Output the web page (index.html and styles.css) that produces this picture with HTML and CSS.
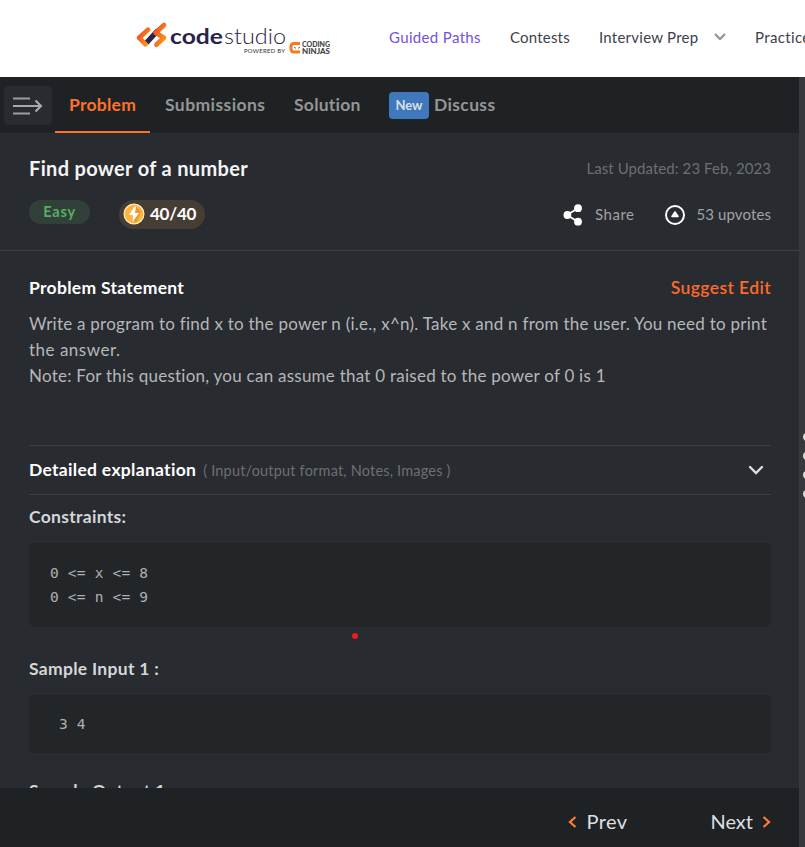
FILE: index.html
```html
<!DOCTYPE html>
<html lang="en">
<head>
<meta charset="utf-8">
<title>Find power of a number</title>
<link rel="stylesheet" href="styles.css">
</head>
<body>
<header class="site-header">
  <svg class="logo" width="196" height="36" viewBox="0 0 196 36">
    <defs>
      <linearGradient id="flame" x1="0" y1="0" x2="1" y2="1"><stop offset="0" stop-color="#f04a23"/><stop offset="1" stop-color="#fb9a1c"/></linearGradient>
    </defs>
    <g transform="translate(0 1.300)" fill="none" stroke-linecap="round" stroke-linejoin="round">
      <path d="M10.500 21.500 22 9" stroke="#2a2348" stroke-width="5.200" stroke-linecap="butt"/>
      <path d="M12 8.500 3.300 16.500 9.500 23" stroke="url(#flame)" stroke-width="4.800"/>
      <path d="M28 3.800 19.500 11.500 28 16.500 20.500 23.300" stroke="url(#flame)" stroke-width="4.800"/>
    </g>
    <text class="logo-code" x="34" y="24" textLength="53" lengthAdjust="spacingAndGlyphs">code</text>
    <text class="logo-studio" x="88" y="24" textLength="62" lengthAdjust="spacingAndGlyphs">studio</text>
    <text class="logo-powered" x="108" y="33" textLength="41">POWERED BY</text>
    <path d="M164 23.500H158Q155 23.500 155 26.500V28.500Q155 32 158 32H164" fill="none" stroke="#f47b20" stroke-width="3"/>
    <path d="M157 26h8v3.500h-8z" fill="#fff"/><path d="M158 27.300l2 1M162 28.300l2-1" stroke="#444" stroke-width=".8"/>
    <text class="logo-ninjas" x="166" y="27.300" textLength="28" lengthAdjust="spacingAndGlyphs">CODING</text>
    <text class="logo-ninjas" x="166" y="34" textLength="28" lengthAdjust="spacingAndGlyphs">NINJAS</text>
  </svg>
  <nav class="nav">
    <a class="nav-guided">Guided Paths</a>
    <a class="nav-contests">Contests</a>
    <a class="nav-interview"><span>Interview Prep</span><svg width="14" height="10" viewBox="0 0 14 10"><path d="M2 2 7 7 12 2" fill="none" stroke="#8d8f98" stroke-width="2"/></svg></a>
    <a class="nav-practice">Practice</a>
  </nav>
</header>
<div class="workspace">
  <main class="panel">
    <div class="tabs">
      <button class="menu-btn"><svg width="32" height="20" viewBox="0 0 32 20"><path d="M1 2.500H18M1 17.500H18" stroke="#9b9da0" stroke-width="2.200"/><path d="M1 10H28M23.500 4.500 29 10 23.500 15.500" fill="none" stroke="#aaa8ab" stroke-width="2.200"/></svg></button>
      <a class="tab tab-active">Problem</a>
      <a class="tab tab-sub">Submissions</a>
      <a class="tab tab-sol">Solution</a>
      <a class="tab tab-dis"><span class="new">New</span>Discuss</a>
    </div>
    <section class="summary">
      <div class="row">
        <h1 class="title">Find power of a number</h1>
        <span class="updated">Last Updated: 23 Feb, 2023</span>
      </div>
      <div class="row meta">
        <div class="badges">
          <span class="easy">Easy</span>
          <span class="score"><svg width="22" height="22" viewBox="0 0 22 22"><circle cx="11" cy="11" r="9.900" fill="#feb43c" stroke="#fff1d2" stroke-width="1.200"/><path d="M13 4 18 8 14 19 9 18z" fill="#e69b2a"/><path d="M11.500 3.500 6 12h4l-.5 7 6.500-9h-4l1-6.500z" fill="#fff"/></svg><span>40/40</span></span>
        </div>
        <div class="actions">
          <svg width="20" height="22" viewBox="0 0 20 22"><path d="M15 4.300 4 11 15 17.700" fill="none" stroke="#fff" stroke-width="1.800"/><g fill="#fff"><circle cx="15" cy="4.200" r="3.900"/><circle cx="4.400" cy="11" r="3.900"/><circle cx="15" cy="17.700" r="3.900"/></g></svg>
          <span class="share">Share</span>
          <svg width="22" height="22" viewBox="0 0 22 22"><circle cx="11" cy="11" r="9" fill="none" stroke="#fff" stroke-width="2"/><path d="M11 8 14 12.400H8z" fill="#fff" stroke="#fff" stroke-width="1.600" stroke-linejoin="round"/></svg>
          <span class="votes">53 upvotes</span>
        </div>
      </div>
    </section>
    <section class="content">
      <div class="row statement-head">
        <h2 class="h">Problem Statement</h2>
        <a class="suggest">Suggest Edit</a>
      </div>
      <p class="statement">Write a program to find x to the power n (i.e., x^n). Take x and n from the user. You need to print<br><span class="answer">the answer.</span><br>Note: For this question, you can assume that 0 raised to the power of 0 is 1</p>
      <div class="row details">
        <div class="details-label"><h2 class="h">Detailed explanation</h2><span class="hint">( Input/output format, Notes, Images )</span></div>
        <svg width="16" height="10" viewBox="0 0 16 10"><path d="M2 2 8 8 14 2" fill="none" stroke="#dedee0" stroke-width="2.400" stroke-linecap="round"/></svg>
      </div>
      <h3 class="h sub constraints">Constraints:</h3>
      <pre class="code">0 &lt;= x &lt;= 8
0 &lt;= n &lt;= 9</pre>
      <h3 class="h sub sample">Sample Input 1 :</h3>
      <pre class="code code-sample"> 3 4</pre>
      <h3 class="h sub output">Sample Output 1 :</h3>
      <i class="dot"></i>
    </section>
    <footer class="pager">
      <a class="prev"><svg width="9" height="14" viewBox="0 0 9 14"><path d="M7.500 2 2 7 7.500 12" fill="none" stroke="#ff7a35" stroke-width="2.300"/></svg><span>Prev</span></a>
      <a class="next"><span>Next</span><svg width="9" height="14" viewBox="0 0 9 14"><path d="M1.500 2 7 7 1.500 12" fill="none" stroke="#ff7a35" stroke-width="2.300"/></svg></a>
    </footer>
  </main>
  <aside class="splitter"><i></i><i></i><i></i><i></i></aside>
</div>
</body>
</html>
```
FILE: styles.css
```css
* { box-sizing: border-box; }
body { margin: 0; height: 847px; overflow: hidden; display: flex; flex-direction: column; background: #fff; font-family: Lato, sans-serif; }
svg { display: block; flex: none; }
h1, h2, h3, p, pre { margin: 0; }
.site-header { height: 77px; flex: none; display: flex; overflow: hidden; }
.logo { margin: 20px 0 0 136px; }
.logo-code, .logo-studio { font-size: 21px; fill: #2a2348; }
.logo-code { font-weight: 700; }
.logo-studio { font-weight: 300; }
.logo-powered { font-size: 6px; fill: #333; }
.logo-ninjas { font-size: 7px; font-weight: 900; fill: #444; }
.nav { display: flex; height: 74px; align-items: center; font-size: 15px; letter-spacing: .35px; color: #3e414a; white-space: nowrap; margin-left: 57px; }
.nav a { flex: none; }
.nav-guided { color: #7450e0; width: 121px; }
.nav-contests { width: 89px; letter-spacing: .2px; }
.nav-interview { display: flex; align-items: center; justify-content: space-between; width: 128px; letter-spacing: .25px; }
.nav-practice { margin-left: 28px; }
.workspace { flex: 1; display: flex; min-height: 0; }
.panel { width: 799px; background: #282b30; display: flex; flex-direction: column; }
.splitter { width: 6px; background: #35383d; overflow: hidden; padding-top: 356px; }
.splitter i { display: block; width: 8px; height: 8px; border-radius: 50%; background: #dcdcdc; margin: 0 0 11px 4px; }
.tabs { height: 56px; flex: none; background: #1e2224; display: flex; font-size: 17.5px; letter-spacing: .25px; font-weight: 700; color: #949595; }
.menu-btn { width: 48px; height: 39px; margin: 9px 3px 0 4px; border: 0; padding: 0; border-radius: 4px; background: #282b30; display: flex; align-items: center; justify-content: center; }
.tab { display: flex; align-items: center; white-space: nowrap; padding-bottom: 1px; }
.tab-active { width: 95px; padding-left: 14px; color: #ff7129; border-bottom: 2px solid #ff7129; padding-top: 1px; }
.tab-sub { margin-left: 15px; width: 129px; letter-spacing: .42px; }
.tab-sol { width: 95px; }
.tab-dis { letter-spacing: .35px; }
.new { width: 40px; height: 27px; border-radius: 4px; background: #4078be; color: #dcdfe3; font-size: 13px; letter-spacing: 0; line-height: 27px; text-align: center; margin-right: 5px; position: relative; top: 1px; }
.summary { height: 118px; flex: none; border-bottom: 1px solid #3b3e43; padding: 21px 28px 0 28px; }
.row { display: flex; justify-content: space-between; align-items: center; white-space: nowrap; }
.title { font-size: 20px; line-height: 28px; letter-spacing: .33px; color: #f4f4f5; padding-left: 1px; }
.updated { font-size: 15px; letter-spacing: .08px; color: #6d6f73; }
.meta { margin-top: 18px; height: 28px; }
.badges { display: flex; align-items: flex-start; height: 29px; }
.easy { width: 61px; height: 24px; line-height: 24px; border-radius: 12px; background: #32403a; color: #58ae61; font-size: 14.5px; letter-spacing: .8px; font-weight: 700; text-align: center; margin: 0 29px 0 1px; }
.score { width: 86px; height: 29px; border-radius: 15px; background: #463d35; color: #fff; font-size: 17px; letter-spacing: -.25px; font-weight: 700; display: flex; align-items: center; padding-left: 4px; gap: 5px; }
.score span { margin-top: -1px; }
.actions { display: flex; align-items: center; font-size: 15px; letter-spacing: .1px; color: #a1a2a5; }
.actions svg { position: relative; top: 1px; }
.share { margin: 0 29px 0 12px; letter-spacing: .5px; }
.votes { margin-left: 11px; }
.content { flex: 1; min-height: 0; overflow: hidden; position: relative; padding: 24px 28px 0 29px; }
.h { font-size: 17.5px; line-height: 26px; letter-spacing: .3px; font-weight: 700; color: #fff; white-space: nowrap; }
.suggest { font-size: 17.5px; letter-spacing: .4px; color: #ff6a2b; font-weight: 600; line-height: 26px; }
.statement { margin-top: 10px; font-size: 17px; line-height: 26px; letter-spacing: .25px; color: #b6b7b9; white-space: nowrap; }
.answer { letter-spacing: .5px; }
.details { margin-top: 56px; height: 50px; border-top: 1px solid #3b3e43; border-bottom: 1px solid #3b3e43; padding-right: 7px; }
.details-label { display: flex; align-items: center; gap: 7px; }
.hint { font-size: 14.5px; letter-spacing: .19px; color: #6d6f73; padding-top: 1px; }
.sub { color: #d5d6d7; }
.constraints { margin-top: 9px; }
.code { margin-top: 13px; height: 84px; padding: 18px 21px; border-radius: 6px; background: #232629; color: #aeb0b2; font: 14.5px/24px "DejaVu Sans Mono", monospace; letter-spacing: .2px; }
.sample { margin-top: 29px; }
.code-sample { height: 58px; padding-top: 17px; }
.output { margin-top: 25px; }
.dot { position: absolute; left: 352px; top: 382px; width: 6px; height: 6px; border-radius: 50%; background: #ed1c24; }
.pager { height: 59px; flex: none; background: #1e2224; display: flex; justify-content: flex-end; padding: 9px 28px 0 0; color: #dedfe0; font-size: 20px; }
.pager a { display: flex; align-items: center; height: 50px; }
.pager span { margin-top: -2px; }
.prev { gap: 10px; margin-right: 83px; letter-spacing: .4px; }
.next { gap: 9px; }
```
